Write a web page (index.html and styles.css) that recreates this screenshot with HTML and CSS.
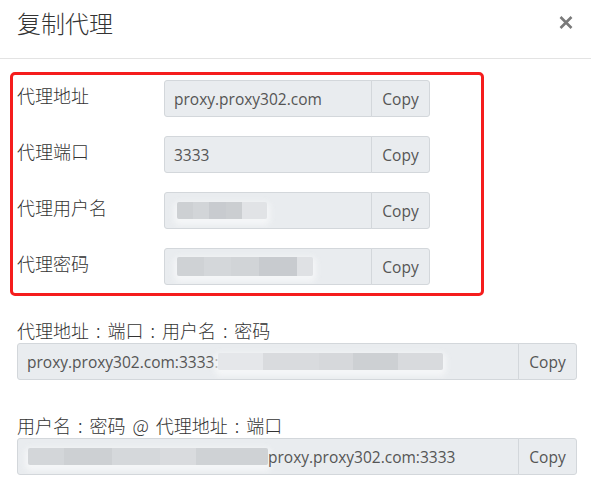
FILE: index.html
```html
<!DOCTYPE html>
<html lang="zh-CN">
<head>
  <meta charset="UTF-8">
  <title>复制代理</title>
  <link rel="stylesheet" href="styles.css">
</head>
<body>
  <div class="modal">
    <div class="modal-header">
      <h4 class="modal-title">复制代理</h4>
      <button class="close-btn" aria-label="close">
        <svg width="14" height="13" viewBox="0 0 14 13"><path d="M1.5 1 L12.5 12 M12.5 1 L1.5 12" stroke="#7a7a7a" stroke-width="2.6"/></svg>
      </button>
    </div>

    <div class="modal-body">
      <div class="field-box">
        <div class="field-row">
          <label>代理地址</label>
          <div class="input-group">
            <div class="input">proxy.proxy302.com</div>
            <button class="copy-btn">Copy</button>
          </div>
        </div>
        <div class="field-row">
          <label>代理端口</label>
          <div class="input-group">
            <div class="input">3333</div>
            <button class="copy-btn">Copy</button>
          </div>
        </div>
        <div class="field-row">
          <label>代理用户名</label>
          <div class="input-group">
            <div class="input"><span class="blur blur-user"></span></div>
            <button class="copy-btn">Copy</button>
          </div>
        </div>
        <div class="field-row">
          <label>代理密码</label>
          <div class="input-group">
            <div class="input"><span class="blur blur-pass"></span></div>
            <button class="copy-btn">Copy</button>
          </div>
        </div>
      </div>

      <div class="combo">
        <div class="combo-label">代理地址 : 端口 : 用户名 : 密码</div>
        <div class="input-group wide">
          <div class="input">proxy.proxy302.com:3333:<span class="blur blur-tail"></span></div>
          <button class="copy-btn">Copy</button>
        </div>
      </div>

      <div class="combo">
        <div class="combo-label">用户名 : 密码 @ 代理地址 : 端口</div>
        <div class="input-group wide">
          <div class="input"><span class="blur blur-head"></span>proxy.proxy302.com:3333</div>
          <button class="copy-btn">Copy</button>
        </div>
      </div>
    </div>
  </div>
</body>
</html>
```

FILE: styles.css
```css
:root {
  --text: #333;
  --input-bg: #e9ecef;
  --input-border: #d3d7db;
  --input-text: #555;
  --mark: #f51d1d;
}

body {
  margin: 0;
  background: #fff;
  color: var(--text);
  font-family: "Open Sans", "Noto Sans CJK SC", sans-serif;
}

.modal {
  width: 591px;
}

.modal-header {
  display: flex;
  justify-content: space-between;
  align-items: flex-start;
  height: 59px;
  box-sizing: border-box;
  padding: 5px 18px 0 17px;
  border-bottom: 1px solid #e3e3e3;
}

.modal-title {
  margin: 0;
  font-family: "Noto Sans CJK SC", sans-serif;
  font-size: 24px;
  font-weight: 300;
  line-height: 36px;
  color: #333;
}

.close-btn {
  background: none;
  border: none;
  padding: 0;
  margin-top: 11px;
  cursor: pointer;
  line-height: 0;
}

.modal-body {
  padding: 13px 0 0 10px;
}

.field-box {
  width: 474px;
  box-sizing: border-box;
  border: 3px solid var(--mark);
  border-radius: 5px;
  padding: 5px 0 8px 4px;
}

.field-row {
  display: flex;
  align-items: flex-start;
  margin-bottom: 19px;
}

.field-row:last-child {
  margin-bottom: 0;
}

.field-row label {
  width: 147px;
  padding-top: 2px;
  font-family: "Noto Sans CJK SC", sans-serif;
  font-size: 18px;
  font-weight: 300;
  line-height: 27px;
}

.input-group {
  display: flex;
  width: 266px;
  height: 37px;
}

.input-group.wide {
  width: 560px;
}

.input {
  flex: 1;
  display: flex;
  align-items: center;
  padding: 0 9px;
  background: var(--input-bg);
  border: 1px solid var(--input-border);
  border-radius: 3px 0 0 3px;
  font-size: 15.5px;
  color: var(--input-text);
  white-space: nowrap;
  overflow: hidden;
}

.copy-btn {
  width: 59px;
  margin-left: -1px;
  background: var(--input-bg);
  border: 1px solid var(--input-border);
  border-radius: 0 3px 3px 0;
  font-family: "Open Sans", sans-serif;
  font-size: 15.5px;
  color: var(--input-text);
  padding: 0;
}

.combo {
  margin-top: 21px;
  padding-left: 7px;
}

.combo + .combo {
  margin-top: 32px;
}

.combo-label {
  font-family: "Noto Sans CJK SC", sans-serif;
  font-size: 18px;
  font-weight: 300;
  line-height: 26px;
  word-spacing: 3px;
}

/* blurred credentials */
.blur {
  display: inline-block;
  height: 17px;
  border-radius: 2px;
  box-shadow: 0 3px 6px 3px rgba(246, 247, 248, 0.9);
}

.blur-user {
  width: 90px;
  margin-left: 3px;
  background: linear-gradient(to right, #cdd0d3 0 18%, #d2d5d8 18% 36%, #c8cbcf 36% 54%, #cbced1 54% 72%, #e1e3e6 72% 100%);
}

.blur-pass {
  width: 136px;
  height: 19px;
  margin-left: 3px;
  background: linear-gradient(to right, #cfd2d5 0 20%, #d4d7da 20% 40%, #d1d4d7 40% 60%, #c8cbcf 60% 88%, #dfe1e4 88% 100%);
}

.blur-tail {
  width: 225px;
  background: linear-gradient(to right, #e5e7ea 0 20%, #d9dbde 20% 45%, #d6d8db 45% 60%, #cdd0d3 60% 80%, #d8dadd 80% 100%);
}

.blur-head {
  width: 240px;
  margin-left: 1px;
  background: linear-gradient(to right, #d3d6d9 0 15%, #cdd0d3 15% 35%, #d5d8db 35% 55%, #d9dbde 55% 70%, #cfd2d5 70% 100%);
}
```
